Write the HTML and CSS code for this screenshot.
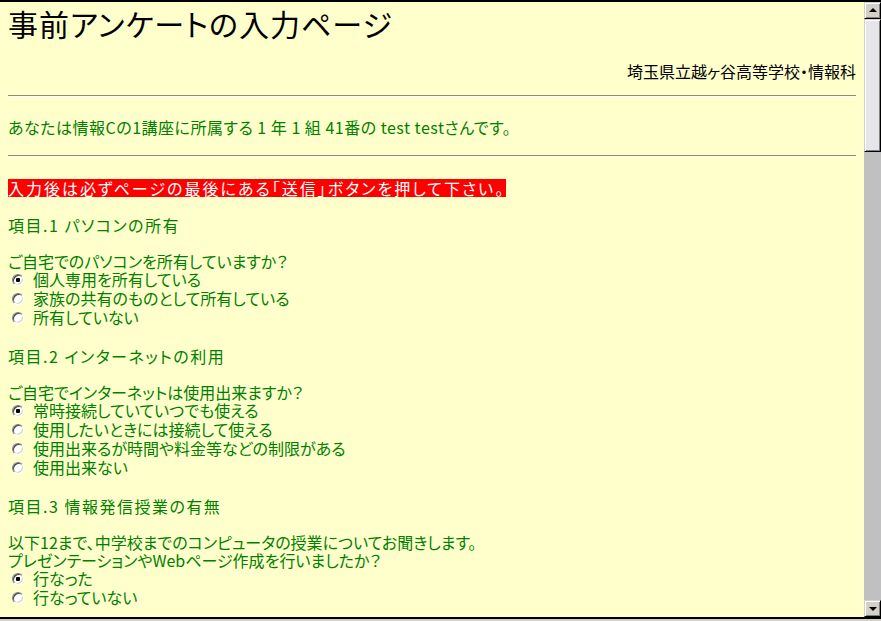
FILE: index.html
```html
<!DOCTYPE html>
<html lang="ja">
<head>
    <meta charset="UTF-8">
    <meta name="viewport" content="width=device-width, initial-scale=1.0">
    <title>事前アンケートの入力ページ</title>
    <link rel="stylesheet" href="styles.css">
</head>
<body>
    <div class="window">
        <div class="viewport">
            <form class="page">
                <h1 class="title">事前アンケートの入力ページ</h1>
                <p class="school">埼玉県立越ヶ谷高等学校・情報科</p>
                <hr class="rule">
                <p class="student">あなたは情報Cの1講座に所属する 1 年 1 組 41番の test testさんです。</p>
                <hr class="rule rule-second">
                <p class="notice"><span class="notice-text">入力後は必ずページの最後にある「送信」ボタンを押して下さい。</span></p>

                <div class="item">
                    <h2 class="item-title">項目.1 パソコンの所有</h2>
                    <p class="question">ご自宅でのパソコンを所有していますか？</p>
                    <label class="option"><input type="radio" name="q1" checked> 個人専用を所有している</label>
                    <label class="option"><input type="radio" name="q1"> 家族の共有のものとして所有している</label>
                    <label class="option"><input type="radio" name="q1"> 所有していない</label>
                </div>

                <div class="item">
                    <h2 class="item-title">項目.2 インターネットの利用</h2>
                    <p class="question">ご自宅でインターネットは使用出来ますか？</p>
                    <label class="option"><input type="radio" name="q2" checked> 常時接続していていつでも使える</label>
                    <label class="option"><input type="radio" name="q2"> 使用したいときには接続して使える</label>
                    <label class="option"><input type="radio" name="q2"> 使用出来るが時間や料金等などの制限がある</label>
                    <label class="option"><input type="radio" name="q2"> 使用出来ない</label>
                </div>

                <div class="item">
                    <h2 class="item-title">項目.3 情報発信授業の有無</h2>
                    <p class="question">以下12まで、中学校までのコンピュータの授業についてお聞きします。<br>プレゼンテーションやWebページ作成を行いましたか？</p>
                    <label class="option"><input type="radio" name="q3" checked> 行なった</label>
                    <label class="option"><input type="radio" name="q3"> 行なっていない</label>
                </div>
            </form>
        </div>
        <div class="scrollbar">
            <div class="sb-btn sb-up"></div>
            <div class="sb-thumb"></div>
            <div class="sb-track"></div>
            <div class="sb-btn sb-down"></div>
        </div>
    </div>
</body>
</html>
```

FILE: styles.css
```css
* { margin: 0; padding: 0; box-sizing: border-box; }
:root {
    --paper: #ffffcc; --green: #008000; --red: #ff0000;
    --face: #d4d0c8; --shadow: #808080; --dark: #404040;
    --font: "Noto Sans CJK JP", "Noto Sans", sans-serif;
}
body { background: var(--face); font-family: var(--font); font-feature-settings: "palt"; overflow: hidden; }
.window { display: flex; height: 619px; border-top: 2px solid #000; border-bottom: 2px solid #000; }
.viewport { flex: 1; background: var(--paper); overflow: hidden; }
.page { padding: 0 8px; color: var(--green); font-size: 16px; line-height: 19px; }

/* header */
.title { font-size: 30px; line-height: 36px; font-weight: normal; color: #000; margin-top: 3px; letter-spacing: 1px; }
.school { color: #000; text-align: right; margin-top: 21px; }
.rule { border: 0; border-top: 1px solid #8c8c6c; border-bottom: 1px solid #fff; margin-top: 14px; }
.student { margin-top: 21px; letter-spacing: 0.5px; }
.rule-second { margin-top: 18px; }
.notice { margin-top: 22px; line-height: 18px; }
.notice-text { display: inline-block; background: var(--red); color: #fff; line-height: 18px; padding-right: 1px; letter-spacing: 2px; }

/* items */
.item { margin-top: 19px; }
.item + .item { margin-top: 20px; }
.item-title { font-size: 16px; font-weight: normal; line-height: 19px; margin-bottom: 17px; letter-spacing: 1.5px; }
.question { line-height: 18px; }
.option { display: flex; align-items: center; padding-left: 4px; height: 19px; gap: 9px; }

/* old style radio */
.option input { appearance: none; -webkit-appearance: none; width: 12px; height: 12px; flex: none; border-radius: 50%; border: 1px solid; border-color: var(--shadow) #fff #fff var(--shadow); box-shadow: inset 1px 1px var(--dark), inset -1px -1px var(--face); background: #fff; margin: 0; }
.option input:checked { background: radial-gradient(circle, #000 0 2px, #fff 2.5px); }

/* scrollbar */
.scrollbar { width: 17px; display: flex; flex-direction: column; background: #c0c0c0; }
.sb-btn { height: 17px; flex: none; background: var(--face); border: 1px solid; border-color: var(--face) #000 #000 var(--face); box-shadow: inset 1px 1px #fff, inset -1px -1px var(--shadow); display: flex; align-items: center; justify-content: center; }
.sb-btn::after { content: ''; width: 0; height: 0; border-left: 4px solid transparent; border-right: 4px solid transparent; }
.sb-up::after { border-bottom: 4px solid #000; margin-top: -1px; }
.sb-down::after { border-top: 4px solid #000; margin-top: 1px; }
.sb-thumb { height: 133px; flex: none; background: #e6e6ea; border: 1px solid; border-color: var(--face) #000 #000 var(--face); box-shadow: inset 1px 1px #fff, inset -1px -1px var(--shadow); }
.sb-track { flex: 1; }
```
